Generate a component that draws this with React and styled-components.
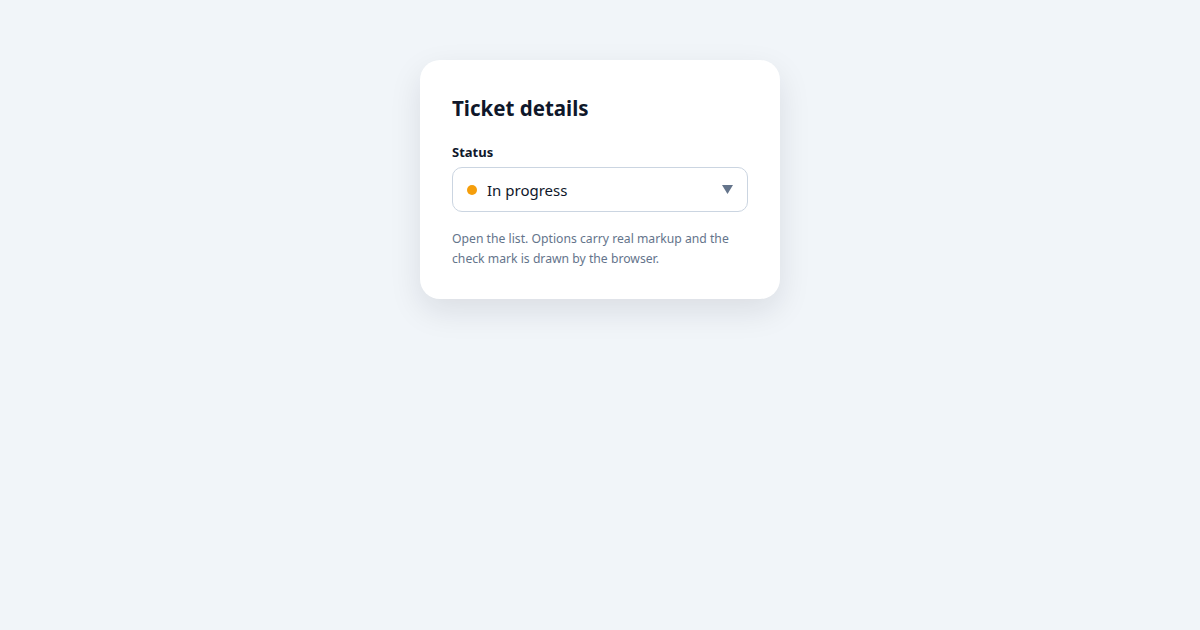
import React from 'react';
import styled, { createGlobalStyle } from 'styled-components';

const GlobalStyle = createGlobalStyle`
  html, body {
    margin: 0;
    padding: 0;
    background: #f1f5f9;
    font-family: "Noto Sans", "Open Sans", sans-serif;
  }
`;

const Page = styled.div`
  display: flex;
  justify-content: center;
  padding-top: 60px;
  min-height: 630px;
  box-sizing: border-box;
`;

const Card = styled.div`
  width: 360px;
  box-sizing: border-box;
  padding: 32px 32px 30px;
  background: #ffffff;
  border-radius: 20px;
  box-shadow: 0 12px 32px rgba(15, 23, 42, 0.1);
  align-self: flex-start;
`;

const Title = styled.h1`
  margin: 0 0 19px;
  font-size: 20.5px;
  line-height: 32px;
  font-weight: 700;
  color: #0f172a;
`;

const Label = styled.div`
  font-size: 13px;
  font-weight: 700;
  line-height: 18px;
  color: #0f172a;
  margin-bottom: 6px;
`;

const Select = styled.div`
  display: flex;
  align-items: center;
  gap: 10px;
  height: 45px;
  box-sizing: border-box;
  padding: 0 14px;
  border: 1px solid #cbd5e1;
  border-radius: 10px;
  background: #fff;
`;

const Dot = styled.span`
  width: 10px;
  height: 10px;
  border-radius: 50%;
  background: ${(p) => p.color};
`;

const Value = styled.span`
  flex: 1;
  font-size: 15px;
  color: #0f172a;
`;

const Arrow = styled.svg`
  display: block;
`;

const Help = styled.p`
  margin: 17px 0 0;
  font-size: 12.2px;
  line-height: 20px;
  color: #64748b;
`;

export default function App() {
  return (
    <>
      <GlobalStyle />
      <Page>
        <Card>
          <Title>Ticket details</Title>
          <Label>Status</Label>
          <Select>
            <Dot color="#f59e0b" />
            <Value>In progress</Value>
            <Arrow width="11" height="9" viewBox="0 0 11 9">
              <path d="M0 0 H11 L5.5 9 Z" fill="#64748b" />
            </Arrow>
          </Select>
          <Help>
            Open the list. Options carry real markup and the check mark is drawn by the browser.
          </Help>
        </Card>
      </Page>
    </>
  );
}
